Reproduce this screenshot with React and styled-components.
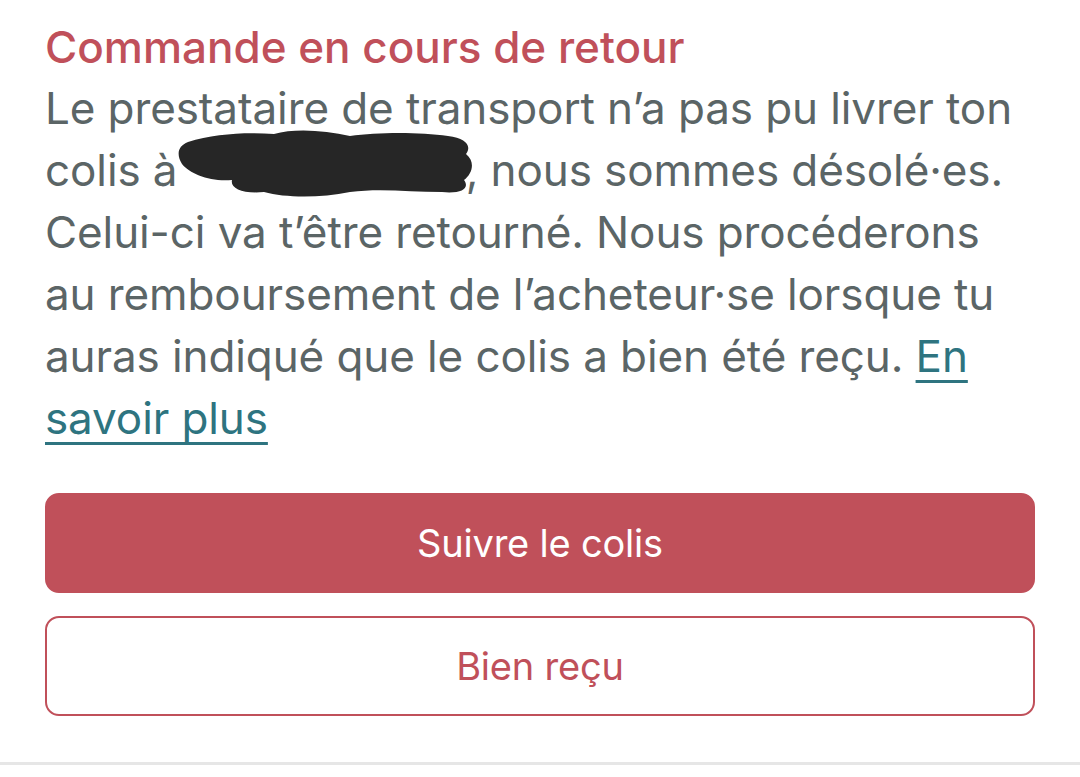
import React from 'react';
import styled, { createGlobalStyle } from 'styled-components';

const GlobalStyle = createGlobalStyle`
  html, body {
    margin: 0;
    padding: 0;
    background: #ffffff;
  }
  body {
    font-family: Inter, "Noto Sans", "Liberation Sans", sans-serif;
    -webkit-font-smoothing: antialiased;
  }
`;

const Page = styled.div`
  width: 1080px;
  height: 777px;
  box-sizing: border-box;
  display: flex;
  flex-direction: column;
  overflow: hidden;
`;

const Card = styled.section`
  padding: 18px 45px 0 45px;
  display: flex;
  flex-direction: column;
  flex: 1;
`;

const Title = styled.h2`
  margin: 0;
  font-size: 44px;
  line-height: 59px;
  font-weight: 500;
  color: #c0505a;
  letter-spacing: 0;
`;

const Body = styled.p`
  margin: 0;
  font-size: 44px;
  line-height: 62px;
  font-weight: 400;
  color: #5b6566;
  letter-spacing: -0.1px;
  white-space: nowrap;
`;

const Link = styled.a`
  color: #2e7480;
  text-decoration: underline;
  text-decoration-thickness: 3px;
  text-underline-offset: 8px;
  text-decoration-skip-ink: none;
`;

const Redacted = styled.span`
  position: relative;
  display: inline-block;
  width: 276px;
  height: 40px;
  vertical-align: middle;

  svg {
    position: absolute;
    left: -16px;
    top: -26px;
    width: 306px;
    height: 72px;
  }
`;

const Actions = styled.div`
  display: flex;
  flex-direction: column;
  gap: 23px;
  margin-top: 44px;
`;

const Button = styled.button`
  height: 100px;
  width: 100%;
  box-sizing: border-box;
  border-radius: 14px;
  font-family: inherit;
  font-size: 38px;
  font-weight: 400;
  letter-spacing: -0.2px;
  cursor: pointer;
  border: 2px solid #c0505a;
  background: ${(p) => (p.$primary ? '#c0505a' : '#ffffff')};
  color: ${(p) => (p.$primary ? '#ffffff' : '#c0505a')};
`;

const Divider = styled.div`
  height: 3px;
  background: #e6e6e6;
  margin-bottom: 12px;
`;

const Scribble = () => (
  <svg viewBox="0 0 306 72" aria-hidden="true">
    <path
      d="M14 14 C40 6 70 4 100 6 C120 0 150 2 176 8 C204 4 246 4 274 8 C292 10 298 18 292 26
         C302 34 298 46 290 52 C296 60 288 66 268 64 C236 64 206 60 176 64 C146 70 112 70 90 64
         C68 66 56 60 58 52 C36 54 16 46 8 36 C2 26 4 18 14 14 Z"
      fill="#262626"
    />
  </svg>
);

export default function App() {
  return (
    <>
      <GlobalStyle />
      <Page>
        <Card>
          <Title>Commande en cours de retour</Title>
          <Body>
            Le prestataire de transport n’a pas pu livrer ton
            <br />
            colis à <Redacted><Scribble /></Redacted>, nous sommes désolé·es.
            <br />
            Celui-ci va t’être retourné. Nous procéderons
            <br />
            au remboursement de l’acheteur·se lorsque tu
            <br />
            auras indiqué que le colis a bien été reçu. <Link href="#">En</Link>
            <br />
            <Link href="#">savoir plus</Link>
          </Body>
          <Actions>
            <Button $primary>Suivre le colis</Button>
            <Button>Bien reçu</Button>
          </Actions>
        </Card>
        <Divider />
      </Page>
    </>
  );
}
